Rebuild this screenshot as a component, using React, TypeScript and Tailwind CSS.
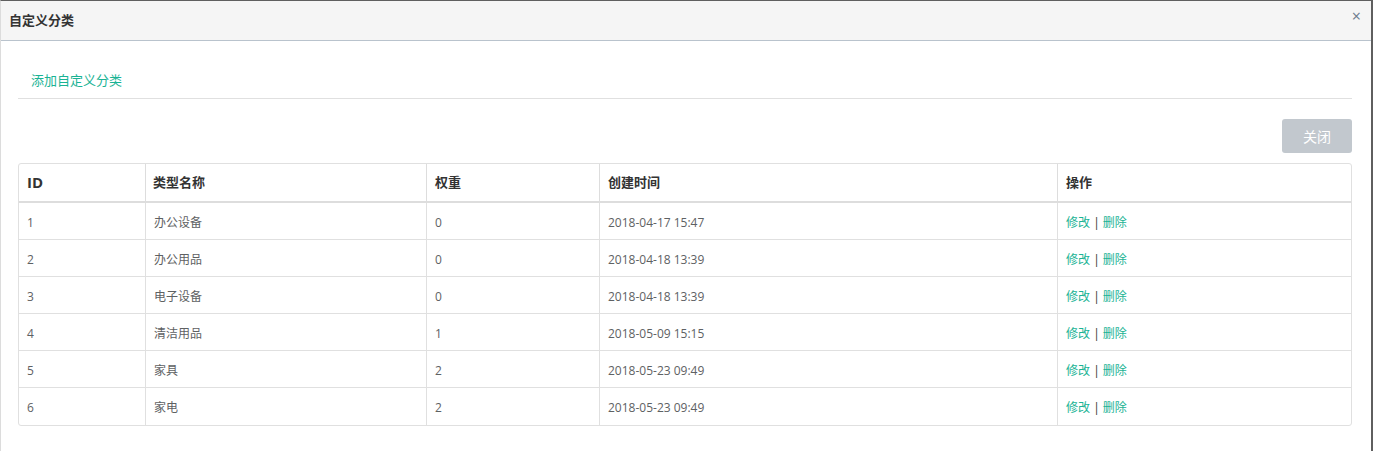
const rows = [
  { id: 1, name: "办公设备", weight: 0, time: "2018-04-17 15:47" },
  { id: 2, name: "办公用品", weight: 0, time: "2018-04-18 13:39" },
  { id: 3, name: "电子设备", weight: 0, time: "2018-04-18 13:39" },
  { id: 4, name: "清洁用品", weight: 1, time: "2018-05-09 15:15" },
  { id: 5, name: "家具", weight: 2, time: "2018-05-23 09:49" },
  { id: 6, name: "家电", weight: 2, time: "2018-05-23 09:49" },
];

export default function App() {
  return (
    <div
      className="w-[1373px] h-[451px] bg-white border-t border-t-[#5f5f5f] border-r-2 border-r-[#5f5f5f] border-l border-l-[#dcdcdc] text-[#5e6163] overflow-hidden"
      style={{ fontFamily: '"Open Sans", "Noto Sans CJK SC", sans-serif' }}
    >
      <div className="h-[40px] bg-[#f5f5f5] border-b border-[#b9c3cd] flex items-center justify-between pl-[8px] pr-[10px]">
        <span className="text-[13px] font-bold text-[#333]">自定义分类</span>
        <span className="text-[16px] leading-none text-[#6b7a8c] -mt-[10px]">×</span>
      </div>

      <div className="pl-[17px] pr-[19px]">
        <div className="h-[58px] border-b border-[#e0e0e0] flex items-center pl-[13px] pt-[22px]">
          <a className="text-[13px] text-[#1ab394]">添加自定义分类</a>
        </div>

        <div className="flex justify-end pt-[20px] pb-[10px]">
          <button className="w-[70px] h-[34px] rounded-[3px] bg-[#c2c8ce] text-white text-[14px]">
            关闭
          </button>
        </div>

        <table className="w-[1334px] border-separate border-spacing-0 border border-[#e0e0e0] rounded-[3px] text-[12px] table-fixed">
          <colgroup>
            <col className="w-[126px]" />
            <col className="w-[281px]" />
            <col className="w-[173px]" />
            <col className="w-[458px]" />
            <col />
          </colgroup>
          <thead>
            <tr className="text-[#333] font-bold text-[13px]">
              <th className="h-[39px] text-left pl-[8px] border-b-2 border-[#ddd] text-[15px]">ID</th>
              <th className="text-left pl-[7px] border-l border-b-2 border-[#ddd]">类型名称</th>
              <th className="text-left pl-[8px] border-l border-b-2 border-[#ddd]">权重</th>
              <th className="text-left pl-[8px] border-l border-b-2 border-[#ddd]">创建时间</th>
              <th className="text-left pl-[8px] border-l border-b-2 border-[#ddd]">操作</th>
            </tr>
          </thead>
          <tbody>
            {rows.map((r, i) => (
              <tr key={r.id}>
                <td className={`h-[37px] pl-[8px] pt-[3px] ${i < rows.length - 1 ? "border-b" : ""} border-[#e0e0e0]`}>{r.id}</td>
                <td className={`pl-[8px] pt-[3px] border-l ${i < rows.length - 1 ? "border-b" : ""} border-[#e0e0e0]`}>{r.name}</td>
                <td className={`pl-[8px] pt-[3px] border-l ${i < rows.length - 1 ? "border-b" : ""} border-[#e0e0e0]`}>{r.weight}</td>
                <td className={`pl-[8px] pt-[3px] border-l ${i < rows.length - 1 ? "border-b" : ""} border-[#e0e0e0]`}>{r.time}</td>
                <td className={`pl-[8px] pt-[3px] border-l ${i < rows.length - 1 ? "border-b" : ""} border-[#e0e0e0]`}>
                  <a className="text-[#1ab394]">修改</a>
                  <span className="text-[#333]"> | </span>
                  <a className="text-[#1ab394]">删除</a>
                </td>
              </tr>
            ))}
          </tbody>
        </table>
      </div>
    </div>
  );
}
